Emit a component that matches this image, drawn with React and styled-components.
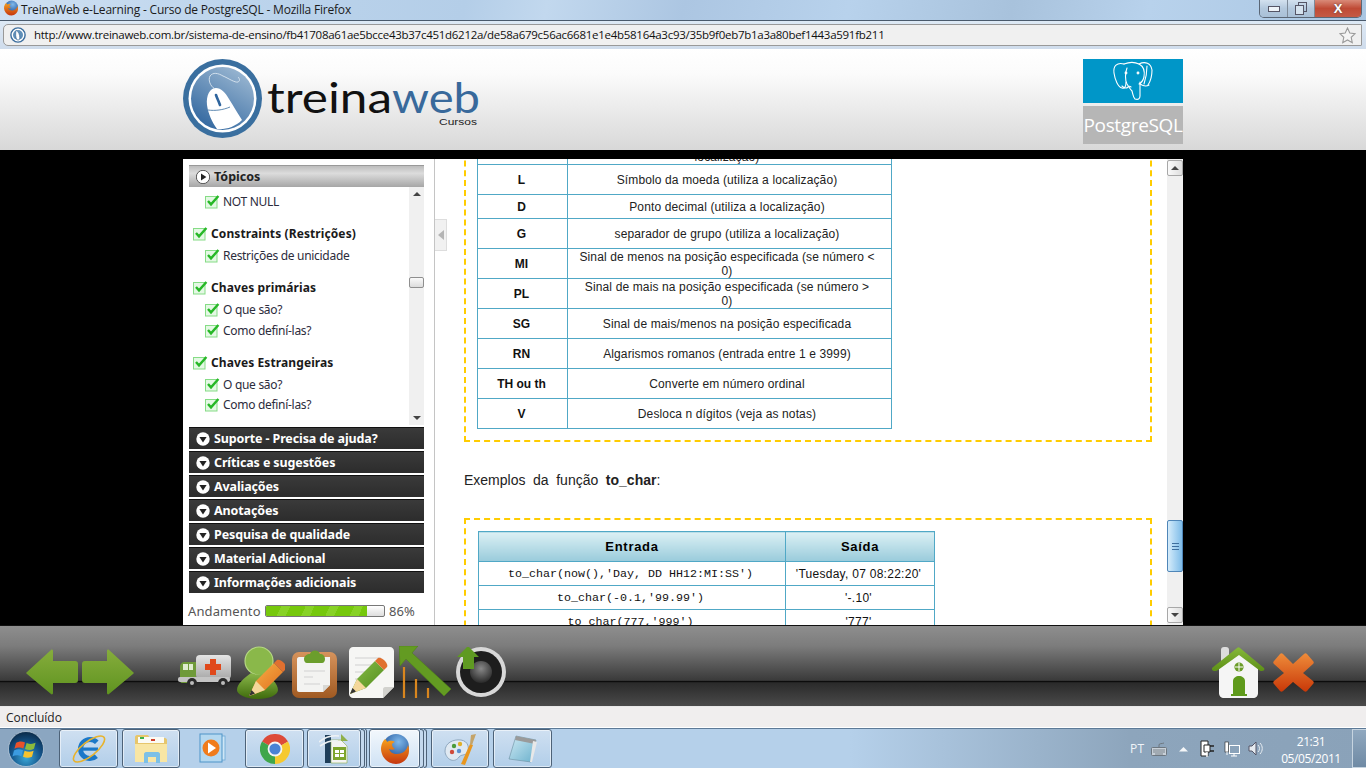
import React from "react";
import styled, { createGlobalStyle } from "styled-components";

const Global = createGlobalStyle`
  html, body { margin: 0; padding: 0; width: 1366px; height: 768px; overflow: hidden; background: #000; }
  * { box-sizing: border-box; }
`;
const ui = `"Open Sans", "Noto Sans", sans-serif`;
const tahoma = `"Noto Sans", "DejaVu Sans", sans-serif`;
const arial = `"Liberation Sans", Arial, sans-serif`;

const Page = styled.div`width:1366px;height:768px;display:flex;flex-direction:column;overflow:hidden;`;

const TitleBar = styled.div`
  height:21px;display:flex;align-items:flex-start;padding-left:3px;
  border-bottom:1px solid #4a5a6c;
  background:linear-gradient(102deg,#cfe0f2 0%,#bcd4ec 18%,#b4cee8 34%,#c2d8ee 40%,#acc6e2 50%,#b8d2ec 62%,#a8c2dc 74%,#b8d2ec 84%,#aac6e2 100%);
`;
const TitleText = styled.span`
  font:12px/20px ${ui};color:#1b1b1b;margin-left:2px;width:335px;white-space:nowrap;letter-spacing:-.2px;
`;
const WinControls = styled.div`
  margin-left:auto;margin-right:4px;height:18px;display:flex;border:1px solid #5a6675;border-top:none;border-radius:0 0 5px 5px;overflow:hidden;
`;
const WinBtn = styled.div`
  width:${p=>p.$w}px;height:100%;display:flex;align-items:center;justify-content:center;
  border-right:${p=>p.$last?"none":"1px solid #7d8a99"};
  background:${p=>p.$close?"linear-gradient(#d98a78,#bf4a35 50%,#c45a45)":"linear-gradient(#d3e1ef,#b3c8dd 50%,#a9c0d7)"};
  color:#fff;font:bold 13px/1 ${arial};text-shadow:0 0 2px #444;
`;
const NavBar = styled.div`
  height:28px;padding:3px 4px 3px 3px;background:linear-gradient(#dde9f5,#cfdcec);
`;
const UrlBox = styled.div`
  height:22px;display:flex;align-items:center;background:#f0f0f0;border:1px solid #999;border-radius:5px 1px 1px 5px;padding:0 5px 0 6px;
`;
const UrlText = styled.span`
  font:11.5px/20px ${ui};color:#111;margin-left:8px;white-space:nowrap;letter-spacing:-.275px;
`;
const Star = styled.div`margin-left:auto;display:flex;`;

const Header = styled.div`
  height:101px;padding:10px 183px 0;display:flex;justify-content:space-between;align-items:flex-start;
  background:linear-gradient(#fff 0%,#fbfbfb 25%,#d8d8d8 100%);
`;
const Badge = styled.div`width:100px;display:flex;flex-direction:column;gap:3px;`;
const BadgeTop = styled.div`height:44px;background:#0096c8;`;
const BadgeBottom = styled.div`
  height:38px;background:#b6b6b6;color:#fff;font:19px/38px ${ui};text-align:center;white-space:nowrap;letter-spacing:-.35px;overflow:hidden;
`;

const Main = styled.div`height:475px;background:#000;padding-top:9px;display:flex;justify-content:center;`;
const Shell = styled.div`width:1000px;height:466px;display:flex;background:#fff;`;
const Sidebar = styled.aside`
  width:252px;padding:6px 10px 0 6px;display:flex;flex-direction:column;border-right:1px solid #c4c4c4;flex:none;
`;
const TopicHead = styled.div`
  height:22px;display:flex;align-items:center;gap:4px;padding-left:7px;border-top:1px solid #999;
  background:linear-gradient(#bdbdbd,#dcdcdc 35%,#a6a6a6);font:bold 12.5px ${tahoma};color:#222;
`;
const Tree = styled.div`height:238px;display:flex;overflow:hidden;`;
const TreeList = styled.div`flex:1;padding:4px 0 0 4px;display:flex;flex-direction:column;`;
const Group = styled.div`display:flex;flex-direction:column;margin-bottom:10px;`;
const GroupTitle = styled.div`
  height:24px;display:flex;align-items:center;gap:3px;font:bold 12px ${tahoma};color:#1a1a1a;letter-spacing:.1px;
`;
const SubItem = styled.div`
  height:20.3px;display:flex;align-items:center;gap:3px;margin-left:12px;font:12px ${tahoma};color:#2c2c3c;letter-spacing:-.3px;
`;
const VScroll = styled.div`
  width:${p=>p.$w}px;flex:none;height:100%;background:#f0f0f0;display:flex;flex-direction:column;align-items:center;
`;
const MiniArrow = styled.div`
  height:${p=>p.$h}px;flex:none;width:100%;display:flex;align-items:center;justify-content:center;
  margin-top:${p=>p.$auto?"auto":"0"};
`;
const TriUp = styled.span`width:0;height:0;border:4px solid transparent;border-top:none;border-bottom:4px solid #444;`;
const TriDown = styled(TriUp)`transform:rotate(180deg);`;
const SideThumb = styled.div`
  width:15px;height:11px;margin-top:${p=>p.$top}px;border:1px solid #8f8f8f;border-radius:2px;background:linear-gradient(#fafafa,#dcdcdc);
`;
const Accordion = styled.div`display:flex;flex-direction:column;gap:2px;margin-top:2px;`;
const AccItem = styled.div`
  height:22px;display:flex;align-items:center;gap:4px;padding-left:7px;border-top:1px solid #111;
  background:linear-gradient(#3a3a3a,#2c2c2c);color:#fff;font:bold 12.5px ${tahoma};letter-spacing:-.12px;
`;
const Progress = styled.div`
  display:flex;align-items:center;height:30px;margin-left:-1px;padding-top:6px;color:#555;font:13px ${tahoma};white-space:nowrap;
`;
const ProgressLabel = styled.span`width:77px;letter-spacing:.1px;`;
const Bar = styled.div`
  width:120px;height:12px;border:1px solid #777;border-radius:2px;background:linear-gradient(#fff,#ddd);overflow:hidden;margin-right:4px;
`;
const BarFill = styled.div`
  height:100%;background:repeating-linear-gradient(115deg,#76c80c 0 14px,#88d226 14px 22px);
`;

const Content = styled.div`position:relative;flex:1;display:flex;min-width:0;`;
const Handle = styled.div`
  position:absolute;left:0;top:60px;width:12px;height:32px;background:#f1f1f1;border:1px solid #ddd;border-left:none;
  display:flex;align-items:center;justify-content:center;
`;
const HandleTri = styled.span`width:0;height:0;border:5px solid transparent;border-left:none;border-right:6px solid #b5b5b5;`;
const Scroller = styled.div`flex:1;overflow:hidden;padding-left:29px;`;
const Dashed = styled.div`
  width:688px;border:2px dashed #ffcc00;padding:11px;margin-top:${p=>p.$mt||0}px;
`;
const Table = styled.table`
  border-collapse:collapse;table-layout:fixed;width:${p=>p.$w}px;margin-left:${p=>p.$ml||0}px;
`;
const Tr = styled.tr`height:${p=>p.$h}px;`;
const Key = styled.td`
  width:90px;border:1px solid #50a8c6;text-align:center;padding:0 2px 0 0;font:bold 12px/14px ${arial};color:#111;
`;
const Val = styled.td`
  border:1px solid #50a8c6;text-align:center;padding:0 5px 0 0;font:12px/14px ${arial};color:#222;letter-spacing:.13px;
`;
const Para = styled.p`
  margin:30px 0;font:14px/16px ${arial};color:#222;word-spacing:3.7px;height:16px;
`;
const Th = styled.th`
  width:${p=>p.$w}px;border:1px solid #50a8c6;padding:0;font:bold 13px ${arial};color:#000;letter-spacing:.7px;
  background:linear-gradient(#dbf0f4,#99cbdb);
`;
const Mono = styled.td`
  border:1px solid #50a8c6;text-align:center;padding:0 3px 0 0;font:11.67px "Liberation Mono",monospace;color:#111;
`;
const Out = styled.td`
  border:1px solid #50a8c6;text-align:center;padding:0 3px 0 0;font:12px ${arial};color:#111;letter-spacing:.27px;
`;
const BtnBox = styled.div`
  width:16px;height:${p=>p.$h||16}px;flex:none;border:1px solid ${p=>p.$blue?"#4f86b8":"#a8a8a8"};border-radius:2px;margin-top:${p=>p.$mt||0}px;
  background:${p=>p.$blue?"linear-gradient(90deg,#d6ecfa,#a9d4f2 50%,#7fbce8)":"linear-gradient(90deg,#fafafa,#dedede)"};
  display:flex;align-items:center;justify-content:center;
`;
const Grip = styled.div`width:7px;height:7px;background:repeating-linear-gradient(#3e6f9e 0 1px,transparent 1px 3px);`;
const MainBar = styled.div`
  width:16px;flex:none;height:100%;background:#f0f0f0;display:flex;flex-direction:column;padding-top:1px;
`;

const Toolbar = styled.div`
  height:82px;padding:12px 52px 0 26px;display:flex;align-items:center;border-top:1px solid #111;border-bottom:1px solid #e8e8e8;
  background:linear-gradient(#8e8e8e 0%,#7c7c7c 25%,#3a3a3a 68%,#050505 69%,#2a2a2a 71%,#4a4a4a 100%);
`;
const Tool = styled.div`display:flex;margin-left:${p=>p.$ml||0}px;flex:none;`;
const Spacer = styled.div`flex:1;`;
const Status = styled.div`
  height:21px;background:#f0eeee;font:12px/21px ${ui};color:#222;padding-left:6px;border-bottom:1px solid #fff;
`;
const Taskbar = styled.div`
  height:40px;display:flex;align-items:stretch;border-top:1px solid #5d7a97;
  background:linear-gradient(90deg,#8ba6c1 0,#8ba6c1 60px,#b5d0ea 130px,#b5d0ea 850px,#8da5bc 1130px,#8aa2b9 100%);
`;
const Start = styled.div`width:59px;flex:none;display:flex;align-items:center;padding-left:8px;`;
const TaskBtn = styled.div`
  width:${p=>p.$w}px;flex:none;margin-left:${p=>p.$ml||0}px;display:flex;align-items:center;justify-content:center;
  ${p=>p.$plain?"":`border:1px solid #4d6278;border-radius:3px;box-shadow:inset 0 0 0 1px rgba(255,255,255,.55);`}
  ${p=>p.$plain?"":`background:linear-gradient(${p.$on?"#f2f7fc,#cfe2f4":"#cfe0f1,#b2cee9"});`}
`;
const Stub = styled.div`
  width:${p=>p.$w}px;flex:none;margin-left:${p=>p.$ml||0}px;border:1px solid #4d6278;border-left:none;border-radius:0 3px 3px 0;background:#c4d9ee;
`;
const Tray = styled.div`margin-left:auto;display:flex;align-items:center;`;
const Lang = styled.span`font:12px ${ui};color:#f0f4f8;width:21px;letter-spacing:.3px;`;
const TrayIcon = styled.div`display:flex;margin-left:${p=>p.$ml}px;`;
const Clock = styled.div`
  width:82px;margin-left:7px;text-align:center;font:12px/17px ${ui};color:#fff;padding-top:2px;letter-spacing:-.4px;
`;
const ShowDesk = styled.div`
  width:14px;align-self:stretch;flex:none;border:1px solid #c6d4e0;border-right:none;background:linear-gradient(#90a8bf,#6f8aa4);
`;

/* ---------- drawings ---------- */
const Check = () => (
  <svg width="15" height="15" viewBox="0 0 15 15" style={{flex:"none"}}>
    <rect x=".5" y="2.5" width="11.5" height="11.5" fill="#e4f8e4" stroke="#86dc86"/>
    <path d="M3 7l3 3.4L13.4 2" fill="none" stroke="#27b827" strokeWidth="2.4"/>
  </svg>
);
const RoundPlay = ({down,light}) => (
  <svg width="14" height="14" viewBox="0 0 14 14" style={{flex:"none"}}>
    <circle cx="7" cy="7" r="6.7" fill="#fff" stroke={light?"#555":"none"}/>
    {down ? <path d="M3.4 5h7.2L7 10.4z" fill="#222"/> : <path d="M5 3.6L10.4 7 5 10.4z" fill="#222"/>}
  </svg>
);
const Firefox = ({s=32}) => (
  <svg width={s} height={s} viewBox="0 0 32 32">
    <defs>
      <radialGradient id={`fxg${s}`} cx=".6" cy=".3" r=".7"><stop offset="0" stopColor="#7fb8ea"/><stop offset="1" stopColor="#1d4f96"/></radialGradient>
      <linearGradient id={`fxo${s}`} x1="0" y1="0" x2="0" y2="1"><stop offset="0" stopColor="#f7a11d"/><stop offset="1" stopColor="#c5360f"/></linearGradient>
    </defs>
    <circle cx="17" cy="14" r="13" fill={`url(#fxg${s})`}/>
    <path d="M6 6C2 10 1 16 3 21c2 6 8 10 14 10 7 0 13-6 13-13 0-2 0-4-1-6-1 5-5 9-11 9-4 0-7-2-8-5 2 1 4 1 6 0-2-1-3-3-3-5 1-1 2-2 3-2-3-2-6-1-8 0 0-1-1-2-2-3z" fill={`url(#fxo${s})`}/>
  </svg>
);
const SiteGlobe = () => (
  <svg width="16" height="16" viewBox="0 0 18 18" style={{flex:"none"}}>
    <circle cx="9" cy="9" r="8" fill="#fff" stroke="#3c6e9e" strokeWidth="1.6"/>
    <circle cx="9" cy="9" r="5.6" fill="#5f8fb8"/>
    <path d="M7 3.5c-1 3-1 9 1 11 2 1 3-1 3-3s-1-6-4-8z" fill="#fff" stroke="#2f5f8f" strokeWidth=".7"/>
  </svg>
);
const Logo = () => (
  <svg width="300" height="80" viewBox="0 0 300 80">
    <defs>
      <linearGradient id="lgDisc" x1=".8" y1="0" x2=".2" y2="1"><stop offset="0" stopColor="#9db9d3"/><stop offset="1" stopColor="#2f659e"/></linearGradient>
      <clipPath id="lgClip"><circle cx="39.5" cy="39.5" r="31.5"/></clipPath>
    </defs>
    <circle cx="39.5" cy="39.5" r="39.5" fill="#3a6f9f"/>
    <circle cx="39.5" cy="39.5" r="34" fill="#fff"/>
    <circle cx="39.5" cy="39.5" r="31.5" fill="url(#lgDisc)"/>
    <g clipPath="url(#lgClip)">
      <path d="M24 46C23 36 27 29 33 29c5 0 9 4 13 11 5 8 9 15 13 21-7 7-17 10-25 9-5-7-9-16-10-24z" fill="#fff"/>
      <path d="M32 30c-5-3-7-9-5-13 3-4 8-3 13 0 5 2 12 7 15 6 2-1 2-3 0-5" fill="none" stroke="#dbe6f0" strokeWidth=".9"/>
      <path d="M33 36c1 3 3 7 4 10" stroke="#2f659e" strokeWidth="2.6" fill="none" strokeLinecap="round"/>
      <path d="M25 51c7 1 15 0 22-3" stroke="#3a6f9f" strokeWidth=".8" fill="none"/>
    </g>
    <text x="84" y="54" fontFamily="Lato, sans-serif" fontSize="43" fontWeight="400" fill="#111" textLength="125" lengthAdjust="spacingAndGlyphs">treina</text>
    <text x="209" y="54" fontFamily="Lato, sans-serif" fontSize="43" fontWeight="400" fill="#38699b" textLength="88" lengthAdjust="spacingAndGlyphs">web</text>
    <text x="256" y="66" fontFamily="Liberation Sans, sans-serif" fontSize="9.5" fill="#222" textLength="38" lengthAdjust="spacingAndGlyphs">Cursos</text>
  </svg>
);
const Elephant = () => (
  <svg width="100" height="44" viewBox="0 0 100 44" style={{display:"block"}}>
    <g fill="none" stroke="#fff" strokeWidth="1.1" strokeLinecap="round" strokeLinejoin="round">
      <path d="M41 5c-7-2-11 2-10 9 1 7 4 14 8 15 3 1 4-2 4-6"/>
      <path d="M41 5c5-2 11-2 15 0 4 2 6 7 5 13-1 4-3 6-5 7"/>
      <path d="M56 5c6-3 12-1 13 6 0 6-2 12-4 15"/>
      <path d="M44 9c-2 5-2 12 0 16 2 3 3 5 5 7 1 3 1 6 3 8 3 1 5 0 5-3V23"/>
      <path d="M57 25c3 2 6 3 9 1M39 27c2 2 4 3 6 1 1-1 2-1 3 0"/>
      <circle cx="43" cy="14" r=".9"/><circle cx="55" cy="14" r=".9"/>
      <path d="M64 7c0 6-1 12-3 18"/>
    </g>
  </svg>
);
const Arrow = ({flip}) => (
  <svg width="52" height="46" viewBox="0 0 52 46" style={flip?{transform:"scaleX(-1)"}:undefined}>
    <defs><linearGradient id="arG" x1="0" y1="0" x2="0" y2="1"><stop offset="0" stopColor="#86ad3c"/><stop offset="1" stopColor="#5f9320"/></linearGradient></defs>
    <path d="M1 23L25 1c1-1 2 0 2 1v10h22c2 0 3 1 3 3v16c0 2-1 3-3 3H27v10c0 1-1 2-2 1L1 25c-1-1-1-1 0-2z" fill="url(#arG)"/>
  </svg>
);
const Ambulance = () => (
  <svg width="54" height="34" viewBox="0 0 54 34">
    <defs><linearGradient id="amb" x1="0" y1="0" x2="0" y2="1"><stop offset="0" stopColor="#e4e4e4"/><stop offset="1" stopColor="#a8a8a8"/></linearGradient></defs>
    <rect x="18" y="0" width="35" height="24" rx="4" fill="url(#amb)"/>
    <path d="M32 4h6v5h5v6h-5v5h-6v-5h-5V9h5z" fill="#e0481a"/>
    <path d="M2 24V12c0-3 2-5 5-5h11v21H4c-2 0-2-2-2-4z" fill="#6f9a3a"/>
    <rect x="5" y="9" width="5" height="6" fill="#dfeccf"/><rect x="11" y="9" width="4" height="6" fill="#dfeccf"/>
    <rect x="0" y="22" width="52" height="5" rx="2" fill="#c4c4c4"/>
    <circle cx="14" cy="28" r="5" fill="#2a2a2a"/><circle cx="14" cy="28" r="2" fill="#bbb"/>
    <circle cx="45" cy="28" r="5" fill="#2a2a2a"/><circle cx="45" cy="28" r="2" fill="#bbb"/>
  </svg>
);
const Pencil = ({id}) => (
  <g>
    <path d="M0 36L7 21 25 3l9 9-18 18z" fill={`url(#${id})`}/>
    <path d="M0 36L7 21l9 9z" fill="#f4d79a"/>
    <path d="M0 36l2.5-6 3.5 3.5z" fill="#333"/>
    <path d="M25 3l3-3c2-1 5 1 7 3s3 5 2 6l-3 3z" fill="#e07030"/>
  </g>
);
const PersonEdit = () => (
  <svg width="48" height="53" viewBox="0 0 48 53">
    <defs>
      <linearGradient id="pg" x1="0" y1="0" x2="0" y2="1"><stop offset="0" stopColor="#8ab84a"/><stop offset="1" stopColor="#3f6b0c"/></linearGradient>
      <linearGradient id="pen1" x1="0" y1="0" x2="1" y2="1"><stop offset="0" stopColor="#f7b64a"/><stop offset="1" stopColor="#e06a1c"/></linearGradient>
    </defs>
    <circle cx="22" cy="15" r="14" fill="#8ab84a" stroke="#b6d884" strokeWidth="1.2"/>
    <path d="M14 27c-7 5-14 11-14 17 0 5 10 9 21 9s20-4 20-9c0-7-8-13-15-17-4 2-8 2-12 0z" fill="url(#pg)"/>
    <g transform="translate(12 14)"><Pencil id="pen1"/></g>
  </svg>
);
const Clipboard = () => (
  <svg width="45" height="52" viewBox="0 0 45 52">
    <defs><linearGradient id="cb" x1="0" y1="0" x2="0" y2="1"><stop offset="0" stopColor="#d6935c"/><stop offset="1" stopColor="#a05a22"/></linearGradient></defs>
    <rect x="0" y="6" width="45" height="46" rx="7" fill="url(#cb)"/>
    <path d="M7 11h31v28l-7 7H7c-1 0-2-1-2-2V13c0-1 1-2 2-2z" fill="#f3f3f1"/>
    <path d="M31 46l7-7h-7z" fill="#d8d8d4"/>
    <path d="M12 25h21M12 31h9M12 38h16" stroke="#d2d2d2" strokeWidth="1.2"/>
    <path d="M12 13c0-3 3-5 6-5 1-4 8-5 10 0 3 0 5 2 5 5 0 2-1 4-3 4H15c-2 0-3-2-3-4z" fill="#6b9e2c"/>
  </svg>
);
const NoteEdit = () => (
  <svg width="45" height="51" viewBox="0 0 45 51">
    <defs><linearGradient id="pen2" x1="0" y1="0" x2="1" y2="1"><stop offset="0" stopColor="#8cc04a"/><stop offset="1" stopColor="#4f8a1c"/></linearGradient></defs>
    <path d="M4 0h37c2 0 4 2 4 4v36L34 51H4c-2 0-4-2-4-4V4c0-2 2-4 4-4z" fill="#f6f6f4"/>
    <path d="M34 51V42c0-1 1-2 2-2h9z" fill="#d2d2ce"/>
    <path d="M6 11h26M6 18h22M6 25h14M6 32h9" stroke="#cfcfcf" strokeWidth="1.2"/>
    <g transform="translate(1 11)"><Pencil id="pen2"/></g>
  </svg>
);
const UpLeft = () => (
  <svg width="52" height="52" viewBox="0 0 52 52">
    <path d="M5 21v31M17 33v19M29 42v10" stroke="#d9861e" strokeWidth="2.2"/>
    <path d="M0 0h19l-6 7 39 36-7 7L7 13 1 20z" fill="#639b22" stroke="#4f8418" strokeWidth=".6"/>
  </svg>
);
const Speaker = () => (
  <svg width="50" height="50" viewBox="0 0 50 50">
    <defs><radialGradient id="spk" cx=".5" cy=".35" r=".7"><stop offset="0" stopColor="#888"/><stop offset="1" stopColor="#222"/></radialGradient></defs>
    <circle cx="25" cy="25" r="25" fill="#d8d8d8"/>
    <circle cx="25" cy="25" r="21" fill="#1d1d1d"/>
    <circle cx="25" cy="25" r="11" fill="url(#spk)"/>
    <path d="M0 11L11 0l11 11h-5v12H6V11z" fill="#5f9a22" transform="translate(1 -1)"/>
  </svg>
);
const Home = () => (
  <svg width="53" height="51" viewBox="0 0 53 51">
    <defs><linearGradient id="rf" x1="0" y1="0" x2="0" y2="1"><stop offset="0" stopColor="#86b83a"/><stop offset="1" stopColor="#5d9016"/></linearGradient></defs>
    <rect x="9" y="0" width="8" height="16" rx="3" fill="#ddd"/>
    <path d="M7 20L27 5l19 15v26c0 3-2 5-5 5H12c-3 0-5-2-5-5z" fill="#f5f5f5"/>
    <path d="M0 21L25 1c1-1 2-1 3 0l24 20c1 1 0 3-2 3-1 0-2 0-3-1L27 8 6 23c-2 2-7 1-6-2z" fill="url(#rf)"/>
    <circle cx="27" cy="20" r="4.6" fill="#6b9c28"/>
    <path d="M27 16v8M23 20h8" stroke="#fff" strokeWidth="1"/>
    <path d="M21 48V34c0-3 3-5 6-5s6 2 6 5v14z" fill="#5f9a1c"/>
    <rect x="19" y="47" width="16" height="2" fill="#5f9a1c"/>
  </svg>
);
const CloseX = () => (
  <svg width="41" height="39" viewBox="0 0 41 39">
    <defs><linearGradient id="xg" x1="0" y1="0" x2="0" y2="1"><stop offset="0" stopColor="#ee8c3a"/><stop offset="1" stopColor="#c93808"/></linearGradient></defs>
    <path d="M1 8l6-7c1-1 2-1 3 0l10 10L31 1c1-1 2-1 3 0l6 7c1 1 1 2 0 3L30 20l10 8c1 1 1 2 0 3l-6 7c-1 1-2 1-3 0L20 29 10 38c-1 1-2 1-3 0l-6-7c-1-1-1-2 0-3l10-8L1 11C0 10 0 9 1 8z" fill="url(#xg)"/>
  </svg>
);
const Orb = () => (
  <svg width="36" height="36" viewBox="0 0 36 36">
    <defs><radialGradient id="orb" cx=".5" cy=".75" r=".7"><stop offset="0" stopColor="#3aa8d8"/><stop offset=".6" stopColor="#14548a"/><stop offset="1" stopColor="#0c2f50"/></radialGradient></defs>
    <circle cx="18" cy="18" r="17.5" fill="url(#orb)" stroke="#dbe6ef" strokeWidth=".6"/>
    <path d="M8 12c3-2 6-2 9-.5l-1.6 6c-3-1.4-6-1.4-9 .3z" fill="#e8512a"/>
    <path d="M18.6 12c3 1.3 6 1.3 9-.2l-1.6 6c-3 1.6-6 1.4-9 .2z" fill="#8cbb3c"/>
    <path d="M6 19.6c3-1.6 6-1.6 9-.3l-1.6 6c-3-1.3-6-1.3-9 .3z" fill="#3b9be0"/>
    <path d="M16.6 19.8c3 1.4 6 1.4 9 0l-1.6 6c-3 1.4-6 1.3-9 0z" fill="#f7c32e"/>
  </svg>
);
const IE = () => (
  <svg width="34" height="32" viewBox="0 0 34 32">
    <circle cx="18" cy="16" r="9.5" fill="none" stroke="#1c78c8" strokeWidth="5" strokeDasharray="44 16" strokeDashoffset="-8"/>
    <rect x="10" y="14.5" width="16" height="3.2" fill="#1c78c8"/>
    <ellipse cx="17" cy="16" rx="19" ry="7" fill="none" stroke="#e8b32c" strokeWidth="1.6" transform="rotate(-38 17 16)"/>
  </svg>
);
const Folder = () => (
  <svg width="34" height="30" viewBox="0 0 34 30">
    <path d="M1 3c0-1 1-2 2-2h11l2 3h15c1 0 2 1 2 2v22H1z" fill="#e6c66c"/>
    <rect x="4" y="3" width="26" height="6" fill="#fbfbf4"/><rect x="6" y="3" width="4" height="2" fill="#3cb04a"/><rect x="17" y="5" width="4" height="2" fill="#d0402a"/>
    <path d="M1 10h32v18H1z" fill="#f8e6a4"/>
    <path d="M10 29V20c0-1 1-2 2-2h12c1 0 2 1 2 2v9h-4v-6h-8v6z" fill="#7cc0e6"/>
  </svg>
);
const Media = () => (
  <svg width="28" height="32" viewBox="0 0 28 32">
    <rect x="6" y="3" width="20" height="24" fill="#cfe6f6" stroke="#6aa8d6" strokeWidth=".8"/>
    <rect x="1" y="1" width="22" height="28" fill="#b4d8f0" stroke="#4f94c8"/>
    <circle cx="12" cy="15" r="8.5" fill="#f07c1c"/>
    <path d="M9 9.5l8 5.5-8 5.5z" fill="#fff"/>
  </svg>
);
const Chrome = () => (
  <svg width="30" height="30" viewBox="0 0 30 30">
    <path d="M15 15L2 7.5A15 15 0 0 1 28 7.5z" fill="#dd4a38"/>
    <path d="M15 15L15 30A15 15 0 0 1 2 7.5z" fill="#3fa64a"/>
    <path d="M15 15L28 7.5A15 15 0 0 1 15 30z" fill="#f6c92f"/>
    <circle cx="15" cy="15" r="7.4" fill="#f4f4f4"/><circle cx="15" cy="15" r="5.6" fill="#4a82d4"/>
  </svg>
);
const OOo = () => (
  <svg width="30" height="32" viewBox="0 0 30 32">
    <rect x="6" y="2" width="6" height="28" fill="#1e3e5a"/>
    <path d="M12 7h10l6 6v17H12z" fill="#f4f4f4" stroke="#8fb04a" strokeWidth=".6"/>
    <path d="M22 1l7 7-7 0z" fill="#8fb04a"/>
    <path d="M0 9c6-5 12-7 20-6M1 13c6-4 12-6 18-5" stroke="#eef2f5" strokeWidth="1.6" fill="none"/>
    <rect x="14" y="14" width="13" height="13" fill="#7ea62c"/>
    <path d="M16 17h4v3h-4zM21 17h4v3h-4zM16 21h4v3h-4zM21 21h4v3h-4z" fill="#fff"/>
  </svg>
);
const Paint = () => (
  <svg width="34" height="32" viewBox="0 0 34 32">
    <path d="M2 18C2 10 10 6 18 7c7 1 9 8 6 13-2 3-6 1-8 4-2 3-5 4-8 3-3-1-6-5-6-9z" fill="#dfe9f2" stroke="#8fa8c0"/>
    <circle cx="9" cy="19" r="2.2" fill="#d04a3a"/><circle cx="11" cy="13" r="2.2" fill="#4a9a3a"/><circle cx="17" cy="11" r="2.2" fill="#e0b02a"/><circle cx="16" cy="18" r="2.2" fill="#5a8fd0"/>
    <path d="M18 31l9-20 3 1-8 20z" fill="#e8961e"/>
    <path d="M27 11l1-9 5-1-4 11z" fill="#c4a46a"/>
  </svg>
);
const Notepad = () => (
  <svg width="30" height="32" viewBox="0 0 30 32">
    <defs><linearGradient id="np" x1="0" y1="0" x2="1" y2="1"><stop offset="0" stopColor="#cfeaf4"/><stop offset="1" stopColor="#6ab0cc"/></linearGradient></defs>
    <path d="M8 3l20 4-5 22-22-3z" fill="url(#np)" stroke="#6a8fa0" strokeWidth=".6"/>
    <path d="M8 3l20 4-1 4-20-4z" fill="#9a9a9a"/>
    <path d="M25 8l4 1-5 20-2 0z" fill="#e8e8e8"/>
  </svg>
);

const Topic = ({title, items}) => (
  <Group>
    {title && <GroupTitle><Check/>{title}</GroupTitle>}
    {items.map((t,i)=><SubItem key={i}><Check/>{t}</SubItem>)}
  </Group>
);

const formats = [
  ["",30,<><br/>localização)</>],
  ["L",30,"Símbolo da moeda (utiliza a localização)"],
  ["D",24,"Ponto decimal (utiliza a localização)"],
  ["G",30,"separador de grupo (utiliza a localização)"],
  ["MI",30,<>Sinal de menos na posição especificada (se número &lt;<br/>0)</>],
  ["PL",30,<>Sinal de mais na posição especificada (se número &gt;<br/>0)</>],
  ["SG",30,"Sinal de mais/menos na posição especificada"],
  ["RN",30,"Algarismos romanos (entrada entre 1 e 3999)"],
  ["TH ou th",30,"Converte em número ordinal"],
  ["V",30,"Desloca n dígitos (veja as notas)"],
];
const examples = [
  ["to_char(now(),'Day, DD HH12:MI:SS')","'Tuesday, 07 08:22:20'"],
  ["to_char(-0.1,'99.99')","'-.10'"],
  ["to_char(777,'999')","'777'"],
];
const panels = ["Suporte - Precisa de ajuda?","Críticas e sugestões","Avaliações","Anotações","Pesquisa de qualidade","Material Adicional","Informações adicionais"];
const progress = 86;

export default function App() {
  return (
    <Page>
      <Global/>
      <TitleBar>
        <Firefox s={16}/>
        <TitleText>TreinaWeb e-Learning - Curso de PostgreSQL - Mozilla Firefox</TitleText>
        <WinControls>
          <WinBtn $w={28}><svg width="12" height="8"><rect x=".5" y="1.5" width="11" height="5" fill="#eef3f8" stroke="#556"/></svg></WinBtn>
          <WinBtn $w={27}><svg width="12" height="13"><rect x="3.5" y=".5" width="8" height="9" fill="none" stroke="#556"/><rect x=".5" y="3.5" width="8" height="9" fill="#d5e2ee" stroke="#556"/></svg></WinBtn>
          <WinBtn $w={46} $close $last>X</WinBtn>
        </WinControls>
      </TitleBar>
      <NavBar>
        <UrlBox>
          <SiteGlobe/>
          <UrlText>http://www.treinaweb.com.br/sistema-de-ensino/fb41708a61ae5bcce43b37c451d6212a/de58a679c56ac6681e1e4b58164a3c93/35b9f0eb7b1a3a80bef1443a591fb211</UrlText>
          <Star><svg width="17" height="17" viewBox="0 0 17 17"><path d="M8.5 1l2.3 5 5.4.6-4 3.7 1.1 5.4-4.8-2.7-4.8 2.7 1.1-5.4-4-3.7 5.4-.6z" fill="#f4f4f4" stroke="#999" strokeWidth="1.1"/></svg></Star>
        </UrlBox>
      </NavBar>
      <Header>
        <Logo/>
        <Badge>
          <BadgeTop><Elephant/></BadgeTop>
          <BadgeBottom>PostgreSQL</BadgeBottom>
        </Badge>
      </Header>
      <Main>
        <Shell>
          <Sidebar>
            <TopicHead><RoundPlay light/>Tópicos</TopicHead>
            <Tree>
              <TreeList>
                <Topic items={["NOT NULL"]}/>
                <Topic title="Constraints (Restrições)" items={["Restrições de unicidade"]}/>
                <Topic title="Chaves primárias" items={["O que são?","Como definí-las?"]}/>
                <Topic title="Chaves Estrangeiras" items={["O que são?","Como definí-las?"]}/>
              </TreeList>
              <VScroll $w={15}>
                <MiniArrow $h={14}><TriUp/></MiniArrow>
                <SideThumb $top={76}/>
                <MiniArrow $h={14} $auto><TriDown/></MiniArrow>
              </VScroll>
            </Tree>
            <Accordion>
              {panels.map(p=><AccItem key={p}><RoundPlay down/>{p}</AccItem>)}
            </Accordion>
            <Progress>
              <ProgressLabel>Andamento</ProgressLabel>
              <Bar><BarFill style={{width:`${progress}%`}}/></Bar>
              {progress}%
            </Progress>
          </Sidebar>
          <Content>
            <Handle><HandleTri/></Handle>
            <Scroller>
              <Dashed $mt={-38}>
                <Table $w={415}>
                  <tbody>
                    {formats.map(([k,h,v],i)=>(
                      <Tr key={i} $h={h}><Key>{k}</Key><Val>{v}</Val></Tr>
                    ))}
                  </tbody>
                </Table>
              </Dashed>
              <Para>Exemplos da função <b>to_char</b>:</Para>
              <Dashed>
                <Table $w={457} $ml={1}>
                  <thead><Tr $h={30}><Th $w={307}>Entrada</Th><Th>Saída</Th></Tr></thead>
                  <tbody>
                    {examples.map(([a,b])=><Tr key={a} $h={24}><Mono>{a}</Mono><Out>{b}</Out></Tr>)}
                  </tbody>
                </Table>
              </Dashed>
            </Scroller>
            <MainBar>
              <BtnBox><TriUp/></BtnBox>
              <BtnBox $blue $h={52} $mt={344}><Grip/></BtnBox>
              <BtnBox $mt={35}><TriDown/></BtnBox>
            </MainBar>
          </Content>
        </Shell>
      </Main>
      <Toolbar>
        <Tool><Arrow/></Tool>
        <Tool $ml={4}><Arrow flip/></Tool>
        <Tool $ml={44}><Ambulance/></Tool>
        <Tool $ml={5}><PersonEdit/></Tool>
        <Tool $ml={7}><Clipboard/></Tool>
        <Tool $ml={12}><NoteEdit/></Tool>
        <Tool $ml={5}><UpLeft/></Tool>
        <Tool $ml={5}><Speaker/></Tool>
        <Spacer/>
        <Tool><Home/></Tool>
        <Tool $ml={8}><CloseX/></Tool>
      </Toolbar>
      <Status>Concluído</Status>
      <Taskbar>
        <Start><Orb/></Start>
        <TaskBtn $w={59}><IE/></TaskBtn>
        <TaskBtn $w={58} $ml={4}><Folder/></TaskBtn>
        <TaskBtn $w={65} $plain><Media/></TaskBtn>
        <TaskBtn $w={59}><Chrome/></TaskBtn>
        <TaskBtn $w={54} $ml={3}><OOo/></TaskBtn>
        <Stub $w={4}/><Stub $w={2}/>
        <TaskBtn $w={51} $ml={2} $on><Firefox/></TaskBtn>
        <Stub $w={4}/><Stub $w={3}/>
        <TaskBtn $w={58} $ml={4}><Paint/></TaskBtn>
        <TaskBtn $w={59} $ml={4}><Notepad/></TaskBtn>
        <Tray>
          <Lang>PT</Lang>
          <TrayIcon $ml={0}><svg width="16" height="14" viewBox="0 0 16 14"><rect x=".5" y="5.5" width="15" height="8" rx="1" fill="#c8d0d8" stroke="#6d7780"/><path d="M2 8h12M2 10h12M4 12h8" stroke="#7a848c"/><path d="M8 5V3c0-2 3-1 5-2" stroke="#6d7780" fill="none"/></svg></TrayIcon>
          <TrayIcon $ml={12}><svg width="9" height="6"><path d="M0 5.5L4.5 1 9 5.5z" fill="#f4f6f8"/></svg></TrayIcon>
          <TrayIcon $ml={12}><svg width="15" height="18" viewBox="0 0 15 18"><path d="M1 1h7v15H1z" fill="#fff" stroke="#222"/><path d="M6 6h8M6 11h8" stroke="#222" strokeWidth="1.4"/><path d="M4 5h6v7H4z" fill="#fff" stroke="#222"/><path d="M7 12v5" stroke="#fff" strokeWidth="1.4"/></svg></TrayIcon>
          <TrayIcon $ml={9}><svg width="16" height="16" viewBox="0 0 16 16"><rect x="5.5" y="4.5" width="10" height="8" fill="#8aa2b9" stroke="#fff"/><rect x="1" y="1" width="3.5" height="10" fill="#fff" stroke="#222" strokeWidth=".6"/><path d="M3 11v3M10 13v2M7 15h6" stroke="#fff"/></svg></TrayIcon>
          <TrayIcon $ml={8}><svg width="15" height="15" viewBox="0 0 15 15"><path d="M1 5h3l4-4v13L4 10H1z" fill="#e6ebf0" stroke="#556"/><path d="M10 4c2 2 2 5 0 7M12 2c3 3 3 8 0 11" stroke="#e8edf2" fill="none"/></svg></TrayIcon>
          <Clock>21:31<br/>05/05/2011</Clock>
          <ShowDesk/>
        </Tray>
      </Taskbar>
    </Page>
  );
}
